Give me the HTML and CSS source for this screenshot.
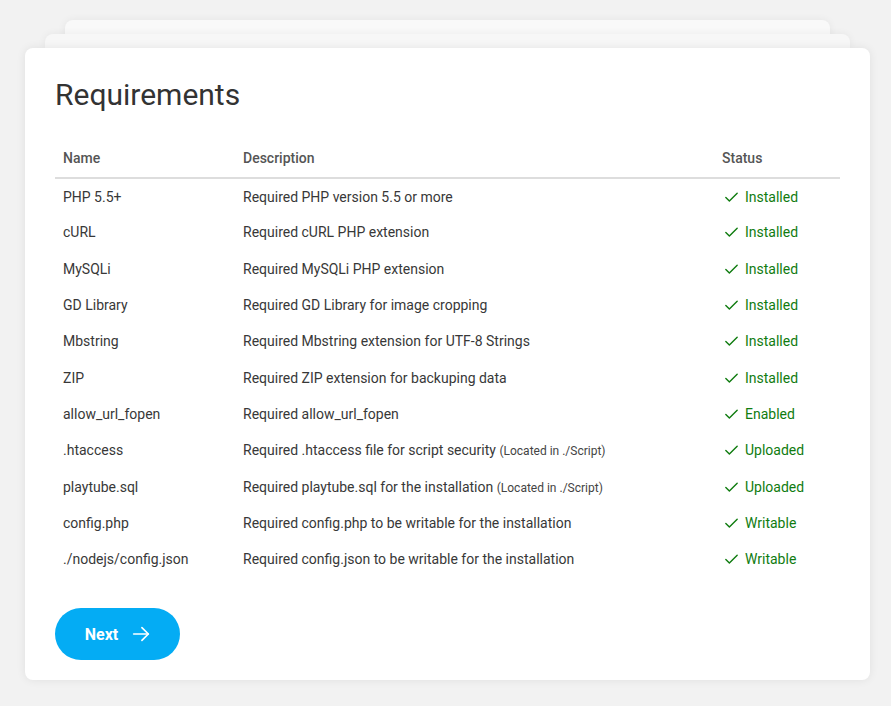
FILE: index.html
```html
<!DOCTYPE html>
<html>
<head>
<meta charset="utf-8">
<link rel="stylesheet" href="styles.css">
</head>
<body>
<div class="stack">
  <div class="card">
    <h1 class="title">Requirements</h1>
    <table class="req">
      <thead>
        <tr><th class="c-name">Name</th><th class="c-desc">Description</th><th class="c-status">Status</th></tr>
      </thead>
      <tbody>
        <tr><td>PHP 5.5+</td><td>Required PHP version 5.5 or more</td><td class="ok"><svg class="chk" viewBox="0 0 24 24"><polyline points="20 6 9 17 4 12"/></svg>Installed</td></tr>
        <tr><td>cURL</td><td>Required cURL PHP extension</td><td class="ok"><svg class="chk" viewBox="0 0 24 24"><polyline points="20 6 9 17 4 12"/></svg>Installed</td></tr>
        <tr><td>MySQLi</td><td>Required MySQLi PHP extension</td><td class="ok"><svg class="chk" viewBox="0 0 24 24"><polyline points="20 6 9 17 4 12"/></svg>Installed</td></tr>
        <tr><td>GD Library</td><td>Required GD Library for image cropping</td><td class="ok"><svg class="chk" viewBox="0 0 24 24"><polyline points="20 6 9 17 4 12"/></svg>Installed</td></tr>
        <tr><td>Mbstring</td><td>Required Mbstring extension for UTF-8 Strings</td><td class="ok"><svg class="chk" viewBox="0 0 24 24"><polyline points="20 6 9 17 4 12"/></svg>Installed</td></tr>
        <tr><td>ZIP</td><td>Required ZIP extension for backuping data</td><td class="ok"><svg class="chk" viewBox="0 0 24 24"><polyline points="20 6 9 17 4 12"/></svg>Installed</td></tr>
        <tr><td>allow_url_fopen</td><td>Required allow_url_fopen</td><td class="ok"><svg class="chk" viewBox="0 0 24 24"><polyline points="20 6 9 17 4 12"/></svg>Enabled</td></tr>
        <tr><td>.htaccess</td><td>Required .htaccess file for script security <small class="note">(Located in ./Script)</small></td><td class="ok"><svg class="chk" viewBox="0 0 24 24"><polyline points="20 6 9 17 4 12"/></svg>Uploaded</td></tr>
        <tr><td>playtube.sql</td><td>Required playtube.sql for the installation <small class="note">(Located in ./Script)</small></td><td class="ok"><svg class="chk" viewBox="0 0 24 24"><polyline points="20 6 9 17 4 12"/></svg>Uploaded</td></tr>
        <tr><td>config.php</td><td>Required config.php to be writable for the installation</td><td class="ok"><svg class="chk" viewBox="0 0 24 24"><polyline points="20 6 9 17 4 12"/></svg>Writable</td></tr>
        <tr><td>./nodejs/config.json</td><td>Required config.json to be writable for the installation</td><td class="ok"><svg class="chk" viewBox="0 0 24 24"><polyline points="20 6 9 17 4 12"/></svg>Writable</td></tr>
      </tbody>
    </table>
    <button class="next">Next <svg class="arrow" viewBox="0 0 24 24"><line x1="4" y1="12" x2="20" y2="12"/><polyline points="13 5 20 12 13 19"/></svg></button>
  </div>
</div>
</body>
</html>
```
FILE: styles.css
```css
* { box-sizing: border-box; }
html, body { margin: 0; }
body {
  background: #f2f2f2;
  font-family: Roboto, "Liberation Sans", Arial, sans-serif;
  color: #333;
  width: 891px;
  height: 706px;
  overflow: hidden;
}
.stack {
  position: relative;
  width: 845px;
  margin: 48px 0 0 25px;
}
.stack::before, .stack::after {
  content: "";
  position: absolute;
  border-radius: 8px 8px 0 0;
  box-shadow: 0 0 8px rgba(0,0,0,0.06);
}
.stack::before {
  left: 40px; right: 40px; top: -28px; height: 28px;
  background: #f9f9f9;
}
.stack::after {
  left: 20px; right: 20px; top: -14px; height: 14px;
  background: #f7f7f7;
}
.card {
  position: relative;
  z-index: 1;
  background: #fff;
  border-radius: 8px;
  box-shadow: 0 0 10px rgba(0,0,0,0.08);
  padding: 29px 30px 20px;
  height: 632px;
}
.title {
  margin: 0 0 26px;
  font-size: 30px;
  font-weight: 400;
  line-height: 36px;
  color: #333;
}
.req {
  width: 785px;
  border-collapse: collapse;
  font-size: 14px;
}
.req th {
  text-align: left;
  font-weight: 500;
  color: #555;
  padding: 9px 8px;
  line-height: 20px;
  border-bottom: 2px solid #ddd;
}
.c-name { width: 180px; }
.c-status { width: 126px; }
.req tbody tr { height: 36.3px; }
.req td {
  padding: 0 8px;
  line-height: 20px;
  color: #383838;
  white-space: nowrap;
  vertical-align: middle;
}
.note { font-size: 12px; line-height: 1; color: #444; }
.req td.ok { color: #107c10; }
.chk {
  width: 17px; height: 17px;
  vertical-align: -4px;
  margin: 0 5px 0 1px;
  fill: none;
  stroke: #107c10;
  stroke-width: 2;
  stroke-linecap: round;
  stroke-linejoin: round;
}
.next {
  margin-top: 31px;
  width: 125px;
  height: 52px;
  border: none;
  border-radius: 26px;
  background: #04acf4;
  color: #fff;
  font-family: Roboto, "Liberation Sans", Arial, sans-serif;
  font-size: 16px;
  font-weight: 700;
  display: flex;
  align-items: center;
  justify-content: center;
  gap: 12px;
  padding: 0 0 0 2px;
}
.arrow {
  width: 22px; height: 22px;
  fill: none;
  stroke: #fff;
  stroke-width: 1.8;
  stroke-linecap: round;
  stroke-linejoin: round;
}
```
